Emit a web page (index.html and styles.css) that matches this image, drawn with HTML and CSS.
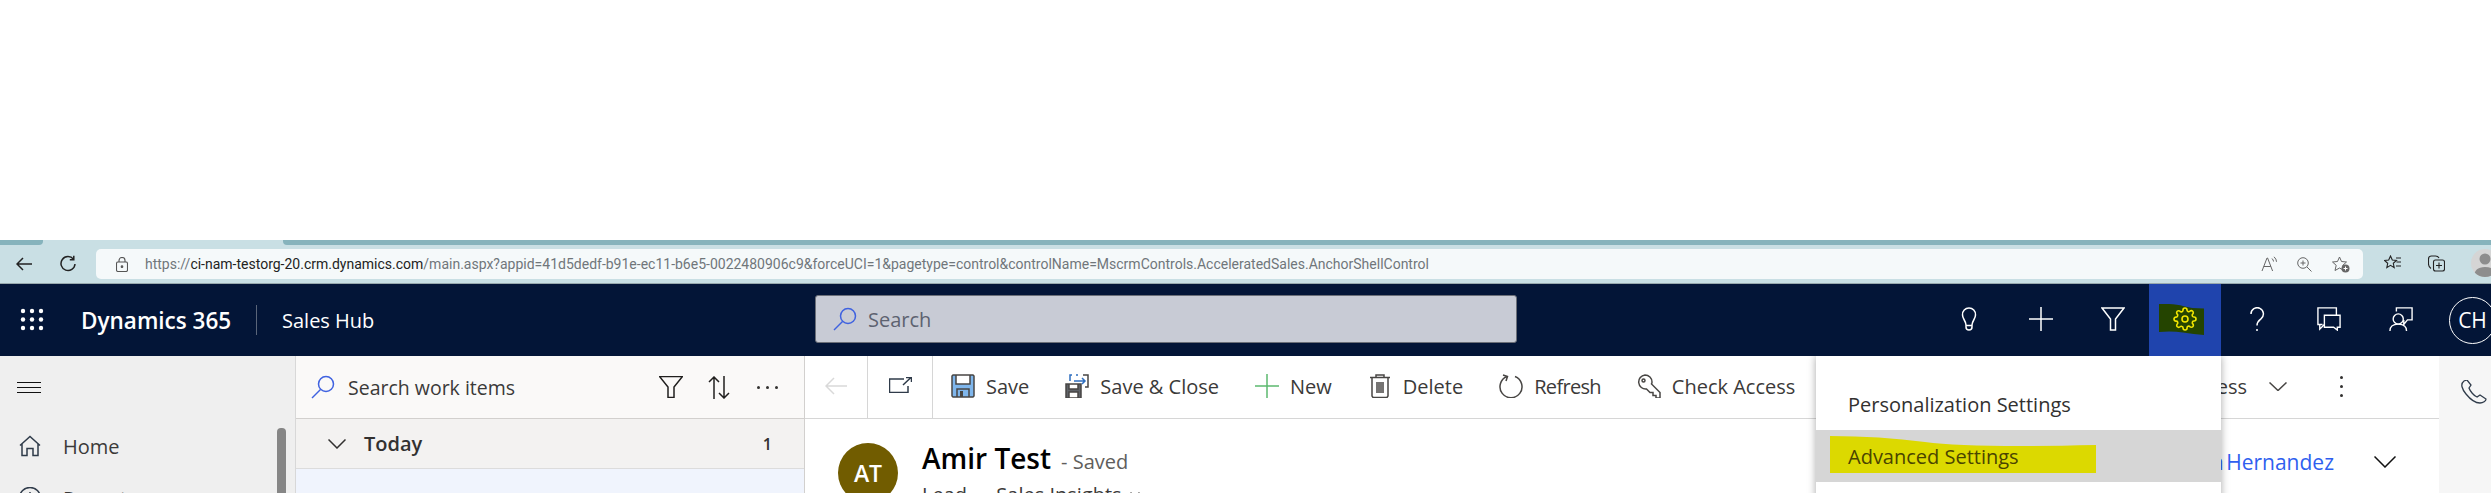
FILE: index.html
```html
<!DOCTYPE html>
<html lang="en">
<head>
<meta charset="utf-8">
<title>Dynamics 365 Sales Hub</title>
<link rel="stylesheet" href="styles.css">
</head>
<body>
<div class="blank"></div>
<div class="tabstrip"><div class="tab-l"></div><div class="tab-active"></div><div class="tab-r"></div></div>
<div class="browserbar">
  <svg class="b-back" viewBox="0 0 16 14"><path d="M16 7H1M7 1 1 7l6 6"/></svg>
  <svg class="b-reload" viewBox="0 0 16 17"><path d="M13.5 4.2A7 7 0 1 0 15 9M13.8 .8v4h-4"/></svg>
  <div class="addr">
    <svg class="b-lock" viewBox="0 0 12 15"><rect x=".5" y="5" width="11" height="9.5" rx="1.5"/><path d="M3 5V3.5a3 3 0 0 1 6 0V5"/><circle cx="6" cy="9.7" r=".8" class="fill"/></svg>
    <div class="url"><span class="u-dim">https://</span><span class="u-dom">ci-nam-testorg-20.crm.dynamics.com</span><span class="u-dim">/main.aspx?appid=41d5dedf-b91e-ec11-b6e5-0022480906c9&amp;forceUCI=1&amp;pagetype=control&amp;controlName=MscrmControls.AcceleratedSales.AnchorShellControl</span></div>
    <div class="addr-icons">
      <svg class="a-read" viewBox="0 0 16 16"><path d="M1 15 6 2h.6l5 13M2.800 10.500h7M11 2.500q1.500 1.500 1.500 3M13 .8q2.500 2.200 2.500 5"/></svg>
      <svg class="a-zoom" viewBox="0 0 15 15"><circle cx="6" cy="6" r="5.300"/><path d="M10 10l4.500 4.500M3.500 6h5M6 3.500v5"/></svg>
      <svg class="a-fav" viewBox="0 0 18 17"><path d="M7.500 1l2 4.500 5 .5-3.700 3.300L12 14.500 7.500 12 3 14.500 4.200 9.300.5 6l5-.5z"/><circle cx="13.500" cy="12.500" r="4" class="fill-grey"/><path d="M11.500 12.500h4M13.500 10.500v4" class="wht"/></svg>
    </div>
  </div>
  <svg class="b-favs" viewBox="0 0 17 16"><path d="M6.500 1l1.800 4 4.200.4-3.200 2.900.9 4.400-3.700-2.300-3.700 2.300.9-4.400L.5 5.400l4.200-.4zM12 3h5M12.500 7H17M12 11h5"/></svg>
  <svg class="b-coll" viewBox="0 0 17 17"><path d="M3 13.500Q.5 12 .5 9V4q0-3 3-3h4q2.500 0 3.500 2"/><rect x="5.500" y="5" width="11" height="11" rx="2"/><path d="M8 10.500h6M11 7.500v6"/></svg>
  <div class="b-avatar"><svg viewBox="0 0 28 28"><circle cx="14" cy="10" r="5.500"/><path d="M3 28q0-10 11-10t11 10z"/></svg></div>
</div>

<header class="nav">
  <svg class="waffle" viewBox="0 0 24 23"><g><circle cx="3" cy="3" r="2.200"/><circle cx="12" cy="3" r="2.200"/><circle cx="21" cy="3" r="2.200"/><circle cx="3" cy="11.500" r="2.200"/><circle cx="12" cy="11.500" r="2.200"/><circle cx="21" cy="11.500" r="2.200"/><circle cx="3" cy="20" r="2.200"/><circle cx="12" cy="20" r="2.200"/><circle cx="21" cy="20" r="2.200"/></g></svg>
  <div class="brand">Dynamics 365</div>
  <div class="nav-sep"></div>
  <div class="app">Sales Hub</div>
  <div class="searchbox">
    <svg class="mag" viewBox="0 0 24 24"><circle cx="15" cy="9" r="7.500"/><path d="M9.500 14.500 1 23"/></svg>
    <span>Search</span>
  </div>
  <div class="nav-actions">
    <div class="nb"><svg viewBox="0 0 24 24"><path d="M12 1a6.500 6.500 0 0 0-6.500 7c0 4 3.500 6 3.500 10v2q0 3 3 3t3-3v-2c0-4 3.500-6 3.500-10A6.500 6.500 0 0 0 12 1zM9 18.500h6"/></svg></div>
    <div class="nb"><svg viewBox="0 0 24 24"><path d="M0 12h24M12 0v24"/></svg></div>
    <div class="nb"><svg viewBox="0 0 24 24"><path d="M1 1h22l-8.500 11v11h-5V12z"/></svg></div>
    <div class="nb nb-on">
      <svg class="flag" viewBox="0 0 45 31"><path d="M0 0q16-.5 24 2t21 2.500V31q-10-1-21-2.500T0 28z"/></svg>
      <svg class="gear" viewBox="0 0 24 24"><circle cx="12" cy="12" r="3"/><path d="M19.400 15a1.650 1.650 0 0 0 .33 1.820l.06.06a2 2 0 0 1 0 2.830 2 2 0 0 1-2.830 0l-.06-.06a1.650 1.650 0 0 0-1.820-.33 1.650 1.650 0 0 0-1 1.510V21a2 2 0 0 1-2 2 2 2 0 0 1-2-2v-.09A1.650 1.650 0 0 0 9 19.400a1.650 1.650 0 0 0-1.820.33l-.06.06a2 2 0 0 1-2.830 0 2 2 0 0 1 0-2.830l.06-.06a1.650 1.650 0 0 0 .33-1.820 1.650 1.650 0 0 0-1.510-1H3a2 2 0 0 1-2-2 2 2 0 0 1 2-2h.09A1.650 1.650 0 0 0 4.600 9a1.650 1.650 0 0 0-.33-1.820l-.06-.06a2 2 0 0 1 0-2.830 2 2 0 0 1 2.830 0l.06.06a1.650 1.650 0 0 0 1.820.33H9a1.650 1.650 0 0 0 1-1.510V3a2 2 0 0 1 2-2 2 2 0 0 1 2 2v.09a1.650 1.650 0 0 0 1 1.510 1.650 1.650 0 0 0 1.820-.33l.06-.06a2 2 0 0 1 2.830 0 2 2 0 0 1 0 2.830l-.06.06a1.650 1.650 0 0 0-.33 1.820V9a1.650 1.650 0 0 0 1.510 1H21a2 2 0 0 1 2 2 2 2 0 0 1-2 2h-.09a1.650 1.650 0 0 0-1.510 1z"/></svg>
    </div>
    <div class="nb"><svg viewBox="0 0 24 24"><path d="M6 7a6.200 6.200 0 1 1 10 4.800c-2.500 2-4 3-4 6.700M12 22v2"/></svg></div>
    <div class="nb"><svg viewBox="0 0 26 26"><path d="M6 19H1V1h20v8M3 19v5l5-5"/><path d="M8 9h17v13h-3v3l-4-3H8z"/></svg></div>
    <div class="nb"><svg viewBox="0 0 26 26"><circle cx="10" cy="13" r="5.500"/><path d="M1 26q0-7.500 9-7.500t9 7.500M8 5V1h17v13h-5l-4 5v-5"/></svg></div>
    <div class="me">CH</div>
  </div>
</header>

<main class="stage">
  <aside class="side">
    <div class="side-col">
      <div class="burger"><i></i><i></i><i></i></div>
      <div class="side-item"><svg viewBox="0 0 22 21"><path d="M1 10 11 1l10 9M3 8.500V20h5v-7h6v7h5V8.500"/></svg><span>Home</span></div>
      <div class="side-item"><svg viewBox="0 0 22 22"><circle cx="11" cy="11" r="10.500"/><path d="M11 5v6l4 3"/></svg><span>Recent</span></div>
    </div>
    <div class="side-thumb"></div>
  </aside>

  <section class="worklist">
    <div class="wl-head">
      <svg class="wl-mag" viewBox="0 0 24 24"><circle cx="15" cy="9" r="7.500"/><path d="M9.500 14.500 1 23"/></svg>
      <span class="wl-search">Search work items</span>
      <svg class="wl-funnel" viewBox="0 0 24 22"><path d="M.5.500h23L15 11v10.500H9V11z"/></svg>
      <svg class="wl-sort" viewBox="0 0 22 23"><path d="M6 23V1M1 6l5-5 5 5M16 0v22M11 17l5 5 5-5"/></svg>
      <span class="wl-dots"><i></i><i></i><i></i></span>
    </div>
    <div class="wl-group">
      <svg class="wl-chev" viewBox="0 0 18 10"><path d="M.5.500 9 9l8.500-8.500"/></svg>
      <span class="wl-today">Today</span>
      <span class="wl-count">1</span>
    </div>
    <div class="wl-row"></div>
  </section>

  <section class="record">
    <div class="cmdbar">
      <div class="cmd-nav"><svg class="c-back" viewBox="0 0 22 18"><path d="M22 9H1M9 1 1 9l8 8"/></svg></div>
      <div class="cmd-nav"><svg class="c-pop" viewBox="0 0 23 16"><path d="M15 2H.5v13.500H19V9M14 8l8-7.500M17 .5h5.500V5"/></svg></div>
      <div class="cmds">
        <div class="cmd"><svg class="ic" viewBox="0 0 24 24"><path class="f-blue" d="M1 1h22v22H1z"/><path class="f-wht" d="M5 1h14v9H5z"/><path d="M2 1h20l1 1v20l-1 1H2l-1-1V2zM5 1v9h14V1M6 23v-8h12v8"/><path class="f-dk" d="M9 17h3v6H9z"/></svg><span>Save</span></div>
        <div class="cmd"><svg class="ic" viewBox="0 0 24 24"><path class="f-grey" d="M1 10h15v14H1z"/><path class="f-wht" d="M4 10h9v5H4zM4 18h9v6H4z"/><path d="M1 10h15v14H1zM4 10v5h9v-5M4 24v-6h9v6"/><path class="s-blue" d="M5 7V1h2M11 1h2M9 7h11M17 4l3 3-3 3"/><path d="M18 1h5v12h-3"/></svg><span>Save &amp; Close</span></div>
        <div class="cmd"><svg class="ic c-green" viewBox="0 0 24 24"><path d="M0 12h24M12 0v24"/></svg><span>New</span></div>
        <div class="cmd"><svg class="ic" viewBox="0 0 24 24"><path d="M2 3.500h20M4 3.500V22l1 1.500h14l1-1.500V3.500M8 3.500V1h8v2.500M9 8v11M11 8v11M13 8v11M15 8v11"/></svg><span>Delete</span></div>
        <div class="cmd"><svg class="ic" viewBox="0 0 24 24"><path d="M16 2.500a11 11 0 1 1-8 0M4 1l4.500 1.500L7 7"/></svg><span class="tight">Refresh</span></div>
        <div class="cmd"><svg class="ic" viewBox="0 0 24 24"><path d="M8 1a7 7 0 0 1 7 7c0 1-.2 1.500-.5 2L23 18.500V24h-4v-2.500h-3v-3h-3L9.500 15A7 7 0 1 1 8 1z"/><circle cx="6.500" cy="6.500" r="1.500"/></svg><span>Check Access</span></div>
      </div>
      <div class="cmd-end">
        <span class="proc">Process</span>
        <svg class="c-chev" viewBox="0 0 18 9"><path d="M.5.500 9 8.500l8.500-8"/></svg>
        <span class="kebab"><i></i><i></i><i></i></span>
      </div>
    </div>
    <div class="rec-body">
      <div class="rec-avatar">AT</div>
      <div class="rec-title">
        <div class="rec-line"><span class="rec-name">Amir Test</span><span class="rec-saved">- Saved</span></div>
        <div class="rec-sub"><span>Lead</span><span class="dot">·</span><span>Sales Insights</span><svg class="sub-chev" viewBox="0 0 10 6"><path d="M.5.500 5 5l4.500-4.500"/></svg></div>
      </div>
      <div class="owner"><span class="owner-name">Carla Hernandez</span><svg class="o-chev" viewBox="0 0 22 12"><path d="M.5.500 11 11 21.500.500"/></svg></div>
    </div>
  </section>

  <aside class="rail"><svg viewBox="0 0 26 24"><path d="M3 1C-1 4 1 9 5 14s9 9 14 9c3 0 6-2 6-4l-6-4-3 2c-3-1-7-6-8-9l2-3-4-5z"/></svg></aside>

  <div class="menu">
    <div class="m-item">Personalization Settings</div>
    <div class="m-item m-hot">
      <svg class="mark" viewBox="0 0 266 37" preserveAspectRatio="none"><path d="M0 0q50 0 95 6t171 3v28H0z"/></svg>
      <span>Advanced Settings</span>
    </div>
  </div>
</main>
</body>
</html>
```

FILE: styles.css
```css
* { box-sizing: border-box; }
html, body { margin: 0; height: 493px; overflow: hidden; background: #fff; }
body { font-family: "Open Sans", "Noto Sans", sans-serif; color: #323130; display: flex; flex-direction: column; }
svg { display: block; fill: none; stroke: currentColor; stroke-width: 1.5; flex: none; }
i { display: block; }

.blank { height: 240px; flex: none; }
.tabstrip { height: 5px; flex: none; display: flex; background: #c9dfe4; }
.tab-l { width: 43px; background: #86b3bc; border-radius: 0 0 4px 0; }
.tab-active { width: 240px; }
.tab-r { flex: 1; background: #86b3bc; border-radius: 0 0 0 4px; }

.browserbar { height: 39px; flex: none; display: flex; align-items: flex-start; background: #c9dfe4; border-bottom: 1px solid #98a9ad; position: relative; color: #222; padding-left: 16px; }
.b-back { width: 16px; height: 14px; margin-top: 12px; }
.b-reload { width: 16px; height: 17px; margin: 10px 0 0 28px; }
.addr { width: 2267px; height: 30px; flex: none; margin: 4px 0 0 20px; background: #f5f9fa; border-radius: 5px; display: flex; align-items: center; padding-left: 20px; }
.b-lock { width: 12px; height: 15px; color: #555; stroke-width: 1.1; }
.fill { fill: #555; }
.url { margin-left: 17px; font-family: "Roboto", "Open Sans", sans-serif; font-size: 14px; color: #222; white-space: nowrap; }
.u-dim { color: #70767a; }
.addr-icons { margin-left: auto; display: flex; align-items: center; padding-right: 13px; color: #666; }
.addr-icons svg { stroke-width: 1; }
.a-read { width: 16px; height: 16px; }
.a-zoom { width: 15px; height: 15px; margin-left: 20px; }
.a-fav { width: 18px; height: 17px; margin-left: 20px; }
.fill-grey { fill: #666; stroke: none; }
.wht { stroke: #fff; }
.b-favs { width: 17px; height: 16px; margin: 10px 0 0 21px; stroke-width: 1.1; }
.b-coll { width: 17px; height: 17px; margin: 10px 0 0 27px; stroke-width: 1.1; }
.b-avatar { width: 28px; height: 28px; margin: 4px 0 0 26px; border-radius: 50%; background: #d5d5d5; overflow: hidden; flex: none; }
.b-avatar svg { width: 28px; height: 28px; fill: #8d8d8d; stroke: none; }

.nav { height: 72px; flex: none; background: #031537; color: #fff; display: flex; align-items: center; padding-left: 20px; }
.waffle { width: 24px; height: 23px; fill: #fff; stroke: none; margin-top: -2px; }
.brand { margin-left: 37px; font-size: 22.5px; font-weight: 600; white-space: nowrap; width: 151px; }
.nav-sep { width: 1px; height: 30px; background: #5a6579; margin-left: 24px; }
.app { margin-left: 25px; font-size: 20px; white-space: nowrap; width: 92px; }
.searchbox { width: 702px; height: 48px; margin-left: 441px; margin-top: -2px; background: #c8cbd5; border: 1px solid #6b6f78; border-radius: 3px; display: flex; align-items: center; padding-left: 17px; color: #5d6270; font-size: 20px; }
.mag { width: 24px; height: 24px; color: #3f62e0; margin-right: 11px; }
.nav-actions { margin-left: auto; display: flex; align-items: center; height: 100%; margin-right: -5px; }
.nb { width: 72px; height: 100%; display: flex; align-items: center; justify-content: center; position: relative; padding-bottom: 2px; }
.nb svg { width: 24px; height: 24px; }
.nb-on { background: #1f44ad; }
.nb .flag { position: absolute; left: 10px; top: 20px; width: 45px; height: 31px; fill: #244400; stroke: none; }
.nb .gear { position: relative; color: #f2e600; stroke-width: 1.6; }
.me { width: 47px; height: 47px; margin-left: 12px; border: 1.5px solid #fff; border-radius: 50%; display: flex; align-items: center; justify-content: center; font-size: 21px; flex: none; }

.stage { flex: 1; min-height: 0; display: flex; position: relative; overflow: hidden; }

.side { width: 296px; flex: none; background: #efefef; border-right: 1px solid #d8d8d8; display: flex; justify-content: space-between; overflow: hidden; }
.side-col { padding: 26px 0 0 17px; }
.burger { width: 24px; height: 11px; display: flex; flex-direction: column; justify-content: space-between; }
.burger i { height: 1px; background: #111; }
.side-item { display: flex; align-items: center; height: 52px; color: #3b3a39; font-size: 20px; white-space: nowrap; padding-left: 2px; }
.burger + .side-item { margin-top: 27px; }
.side-item svg { width: 22px; height: 22px; margin-right: 22px; color: #2f3b4a; }
.side-thumb { width: 9px; height: 70px; margin: 72px 9px 0 0; background: #868686; border-radius: 4px 4px 0 0; }

.worklist { width: 509px; flex: none; border-right: 1px solid #d2d0ce; display: flex; flex-direction: column; }
.wl-head { height: 63px; flex: none; background: #faf9f8; border-bottom: 1px solid #d2d0ce; display: flex; align-items: center; padding-left: 15px; }
.wl-mag { width: 24px; height: 24px; color: #3f62e0; margin-right: 13px; }
.wl-search { font-size: 19.500px; color: #3b3a39; white-space: nowrap; width: 311px; }
.wl-funnel { width: 24px; height: 22px; color: #201f1e; }
.wl-sort { width: 22px; height: 23px; margin-left: 25px; color: #201f1e; }
.wl-dots { display: flex; gap: 6px; margin-left: 27px; }
.wl-dots i { width: 3px; height: 3px; border-radius: 50%; background: #323130; }
.wl-group { height: 50px; flex: none; background: #f3f2f1; border-bottom: 1px solid #dcdcdc; display: flex; align-items: center; padding: 0 32px 0 32px; }
.wl-chev { width: 18px; height: 10px; color: #323130; margin-right: 18px; }
.wl-today { font-size: 20px; font-weight: 600; }
.wl-count { margin-left: auto; font-size: 16px; font-weight: 600; }
.wl-row { flex: 1; background: #f0f4fd; }

.record { flex: 1; min-width: 0; display: flex; flex-direction: column; }
.cmdbar { height: 63px; flex: none; border-bottom: 1px solid #d6d6d6; display: flex; align-items: stretch; }
.cmd-nav { width: 63px; border-right: 1px solid #d6d6d6; display: flex; align-items: center; justify-content: center; }
.cmd-nav + .cmd-nav { width: 65px; }
.c-back { width: 22px; height: 18px; color: #d9d9d9; margin-bottom: 2px; }
.c-pop { width: 23px; height: 16px; color: #2f3b4a; margin-bottom: 4px; }
.cmds { display: flex; align-items: center; gap: 36px; padding-left: 18px; white-space: nowrap; padding-bottom: 2px; }
.cmd { display: flex; align-items: center; gap: 11px; font-size: 20px; color: #3b3a39; }
.tight { letter-spacing: -.7px; }
.ic { width: 24px; height: 24px; color: #484644; }
.c-green { color: #5cb96f; }
.f-blue { fill: #7fb6ec; stroke: none; }
.f-wht { fill: #fff; stroke: none; }
.f-dk { fill: #484644; stroke: none; }
.f-grey { fill: #5f6368; stroke: none; }
.s-blue { stroke: #2f6fc0; }
.cmd-end { margin-left: auto; display: flex; align-items: center; padding-right: 96px; padding-bottom: 2px; }
.proc { font-size: 20px; color: #3b3a39; }
.c-chev { width: 18px; height: 9px; margin-left: 22px; color: #484644; }
.kebab { display: flex; flex-direction: column; gap: 6px; margin-left: 53px; }
.kebab i { width: 3px; height: 3px; border-radius: 50%; background: #323130; }

.rec-body { flex: 1; position: relative; display: flex; padding: 24px 0 0 33px; overflow: hidden; }
.rec-avatar { width: 60px; height: 60px; flex: none; border-radius: 50%; background: #715c00; color: #fff; font-size: 23px; font-weight: 600; display: flex; align-items: center; justify-content: center; }
.rec-title { margin-left: 24px; }
.rec-line { display: flex; align-items: baseline; gap: 10px; height: 40px; margin-top: -4px; }
.rec-name { font-size: 28px; font-weight: 600; color: #000; white-space: nowrap; }
.rec-saved { font-size: 20px; color: #605e5c; }
.rec-sub { display: flex; align-items: center; gap: 12px; font-size: 20px; color: #3b3a39; margin-top: 2px; }
.sub-chev { width: 10px; height: 6px; margin-left: -4px; color: #605e5c; }
.owner { position: absolute; right: 43px; top: 29px; display: flex; align-items: center; }
.owner-name { font-size: 21px; font-weight: 500; color: #2f5fef; white-space: nowrap; word-spacing: -3px; }
.o-chev { width: 22px; height: 12px; margin-left: 40px; color: #111; }

.rail { width: 52px; flex: none; background: #f6f6f6; padding: 24px 0 0 22px; }
.rail svg { width: 26px; height: 24px; color: #2f3b4a; stroke-width: 1.3; }

.menu { position: absolute; left: 1816px; top: 0; width: 405px; height: 160px; background: #fff; box-shadow: 0 0 8px rgba(0, 0, 0, .35); padding-top: 22px; }
.m-item { height: 52px; display: flex; align-items: center; padding-left: 32px; font-size: 20px; color: #323130; white-space: nowrap; position: relative; }
.m-hot { background: #d6d6d6; }
.mark { position: absolute; left: 14px; top: 6px; width: 266px; height: 37px; fill: #dcd900; stroke: none; }
.m-hot span { position: relative; color: #4a4400; }
```
